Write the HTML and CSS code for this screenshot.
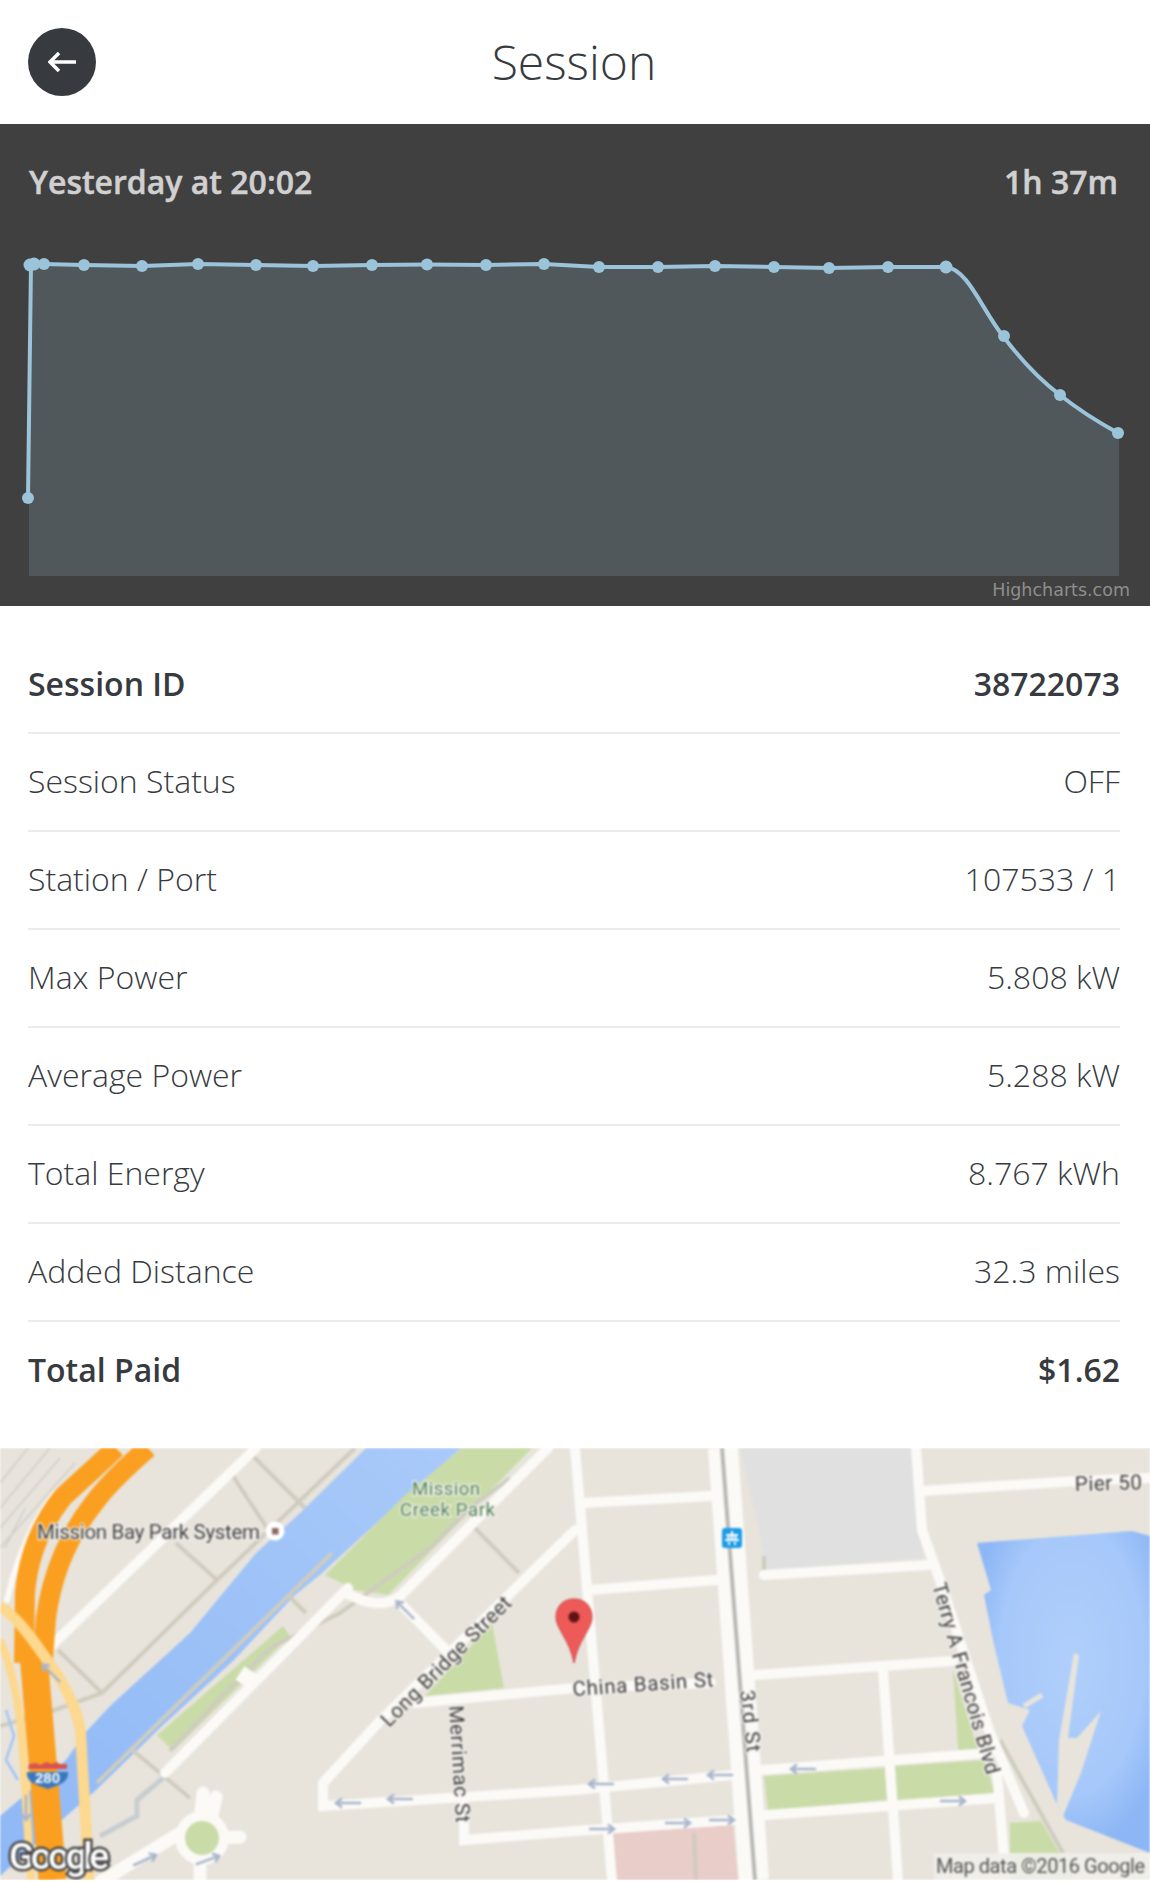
FILE: index.html
```html
<!DOCTYPE html>
<html lang="en">
<head>
<meta charset="utf-8">
<title>Session</title>
<link rel="stylesheet" href="styles.css">
</head>
<body>
<header class="topbar">
  <a class="back" aria-label="Back">
    <svg class="back-icon" viewBox="0 0 28 20"><path d="M28 10H2M11 1 2 10l9 9" /></svg>
  </a>
  <h1 class="title">Session</h1>
</header>

<section class="chart">
  <div class="chart-head">
    <span>Yesterday at 20:02</span>
    <span>1h 37m</span>
  </div>
  <svg class="chart-plot" viewBox="0 0 1150 366">
    <path class="area" d="M29 24H32L43 24 84 25 142 26 198 24 256 25 313 26 372 25 427 24.5 486 25 544 24 599 27 658 27 715 26 774 27 829 28 888 27 946 27C968 29 982 70 1003 96 1024 124 1040 140 1060 155 1080 171 1098 182 1119 194V336H29Z"/>
    <path class="line" d="M28 258 31 24H43L84 25 142 26 198 24 256 25 313 26 372 25 427 24.5 486 25 544 24 599 27 658 27 715 26 774 27 829 28 888 27 946 27C968 29 982 70 1003 96 1024 124 1040 140 1060 155 1080 171 1098 182 1118 193"/>
    <g class="dots">
      <circle cx="28" cy="258" r="6"/><circle cx="30" cy="25" r="6.500"/><circle cx="34" cy="24" r="6.500"/><circle cx="44" cy="24" r="6"/>
      <circle cx="84" cy="25" r="6"/><circle cx="142" cy="26" r="6"/><circle cx="198" cy="24" r="6"/><circle cx="256" cy="25" r="6"/>
      <circle cx="313" cy="26" r="6"/><circle cx="372" cy="25" r="6"/><circle cx="427" cy="24.5" r="6"/><circle cx="486" cy="25" r="6"/>
      <circle cx="544" cy="24" r="6"/><circle cx="599" cy="27" r="6"/><circle cx="658" cy="27" r="6"/><circle cx="715" cy="26" r="6"/>
      <circle cx="774" cy="27" r="6"/><circle cx="829" cy="28" r="6"/><circle cx="888" cy="27" r="6"/><circle cx="946" cy="27" r="6.500"/>
      <circle cx="1004" cy="96" r="6"/><circle cx="1060" cy="155" r="6"/><circle cx="1118" cy="193" r="6"/>
    </g>
    <text class="credit" x="1130" y="356" text-anchor="end">Highcharts.com</text>
  </svg>
</section>

<section class="details">
  <div class="row strong"><span>Session ID</span><span>38722073</span></div>
  <div class="row"><span>Session Status</span><span>OFF</span></div>
  <div class="row"><span>Station / Port</span><span>107533 / 1</span></div>
  <div class="row"><span>Max Power</span><span>5.808 kW</span></div>
  <div class="row"><span>Average Power</span><span>5.288 kW</span></div>
  <div class="row"><span>Total Energy</span><span>8.767 kWh</span></div>
  <div class="row"><span>Added Distance</span><span>32.3 miles</span></div>
  <div class="row strong last"><span>Total Paid</span><span>$1.62</span></div>
</section>

<section class="map">
  <svg class="map-canvas" viewBox="0 0 1150 432">
    <defs>
      <linearGradient id="river" x1="0" y1="1" x2="1" y2="0">
        <stop offset="0" stop-color="#8fb8f6"/><stop offset="1" stop-color="#a9caf9"/>
      </linearGradient>
      <radialGradient id="bay" cx="0.55" cy="0.4" r="0.6">
        <stop offset="0" stop-color="#b0cffb"/><stop offset="0.7" stop-color="#a6c8fa"/><stop offset="1" stop-color="#8cb6f5"/>
      </radialGradient>
      <symbol id="arrow-left" viewBox="-14 -6 28 12" overflow="visible"><path d="M13 0H-11M-6 -4.5-12 0-6 4.5"/></symbol>
    </defs>
    <rect class="land" width="1150" height="432"/>

    <g class="hatch">
      <path d="M0 60 50 0M0 80 60 10M0 100 75 15M0 35 28 0M5 100 25 60"/>
    </g>

    <polygon class="water-river" points="366,0 300,65 256,105 190,185 110,258 85,285 66,312 0,368 0,428 55,378 96,342 162,278 234,212 294,148 322,125 404,50 461,0"/>
    <polygon class="park" points="532,0 462,0 404,48 325,127 355,142 388,147"/>
    <polygon class="park" points="283,178 157,287 173,303 290,188"/>
    <polygon class="park" points="492,175 504,240 425,248"/>
    <polygon class="park" points="764,328 885,320 887,352 768,363"/>
    <polygon class="park" points="895,318 984,312 995,345 897,352"/>
    <polygon class="park" points="953,222 958,302 978,302"/>
    <polygon class="park" points="1010,375 1041,373 1075,432 1010,432"/>
    <polygon class="block-pink" points="612,385 733,377 738,432 614,432"/>
    <polygon class="block-gray" points="740,0 912,0 923,110 768,122"/>
    <polygon class="water-bay" points="977,95 1132,83 1150,88 1150,405 1066,372 1055,352 1022,278 1030,262 1008,255 993,192 984,147 991,142"/>
    <polygon class="land" points="1074,205 1079,207 1068,290 1077,290 1101,263 1081,325 1063,368 1057,355 1059,292"/>
    <path class="path-land" d="M1024 258 1042 247"/>

    <g class="path-gray">
      <path d="M253 8 305 60M231 25 267 80M355 0 217 132 102 245 52 263 0 278M176 95 217 132M58 202 102 245M473 78 519 125M332 105 97 335M289 148 306 165M694 385 696 432M764 108V122M1000 292 1063 405"/>
      <path d="M510 30 470 60 430 100 395 125 340 165 310 180 270 200 220 250 170 303M130 300 190 350"/>
    </g>
    <path class="path-pale" d="M163 330 137 352V368L100 388"/>
    <path class="stream" d="M6 262 14 288 6 312 18 332"/>

    <g class="road">
      <path d="M256 0 47 202"/>
      <path class="road-thin" d="M55 45C35 70 18 105 7 152"/>
      <path d="M548 0 400 148C385 160 365 155 348 146"/>
      <path d="M348 140 165 325"/>
      <path d="M400 155 446 202"/>
      <path d="M575 0 612 432"/>
      <path d="M582 55 711 48M590 142 716 132"/>
      <path d="M414 255 575 240 711 235M755 227 953 213"/>
      <path d="M575 82 378 275 323 335V358L575 342 733 327M762 322 989 305"/>
      <path d="M464 358V392L575 383 733 372M766 367 997 350"/>
      <path d="M764 127 929 117"/>
      <path d="M883 222 898 432M997 325 1006 432"/>
      <path d="M916 0 922 82 942 138 989 282 1024 365"/>
      <path d="M922 43 1077 33 1150 30"/>
      <path class="road-wide" d="M240 225 252 233"/>
      <path class="road-spoke" d="M97 436 180 385M203 345 200 372M216 349 211 372M240 389 215 390M200 436V410"/>
      <circle class="ring" cx="202" cy="390" r="27"/>
    </g>
    <path class="road-3rd" d="M723 0 754 432"/>
    <path class="rail" d="M722 0 755 432"/>
    <circle class="park" cx="202" cy="390" r="17"/>

    <path class="highway" d="M116 0C95 20 78 35 62 50 40 78 28 110 25 145L24 215"/>
    <path class="highway" d="M148 0C125 20 105 40 94 55 70 85 52 125 46 170L42 225"/>
    <path class="highway-main" d="M33 200 52.500 432"/>
    <path class="ramp" d="M0 158C20 172 35 195 47 212 68 240 81 270 81 292L89 432"/>
    <path class="ramp-thin" d="M0 192C12 220 20 260 22 292L31 432"/>

    <g class="arrows">
      <use href="#arrow-left" x="334" y="349" width="28" height="12"/>
      <use href="#arrow-left" x="386" y="345" width="28" height="12"/>
      <use href="#arrow-left" x="587" y="330" width="28" height="12"/>
      <use href="#arrow-left" x="661" y="325" width="28" height="12"/>
      <use href="#arrow-left" x="706" y="321" width="28" height="12"/>
      <use href="#arrow-left" x="789" y="315" width="28" height="12"/>
      <use href="#arrow-left" transform="rotate(180 602 381)" x="588" y="375" width="28" height="12"/>
      <use href="#arrow-left" transform="rotate(180 678 375)" x="664" y="369" width="28" height="12"/>
      <use href="#arrow-left" transform="rotate(180 722 372)" x="708" y="366" width="28" height="12"/>
      <use href="#arrow-left" transform="rotate(180 953 353)" x="939" y="347" width="28" height="12"/>
      <use href="#arrow-left" transform="rotate(45 405 162)" x="391" y="156" width="28" height="12"/>
      <use href="#arrow-left" transform="rotate(45 51 225)" x="37" y="219" width="28" height="12"/>
      <use href="#arrow-left" transform="rotate(-90 26 360)" x="12" y="354" width="28" height="12"/>
      <use href="#arrow-left" transform="rotate(155 145 412)" x="131" y="406" width="28" height="12"/>
      <use href="#arrow-left" transform="rotate(160 208 412)" x="194" y="406" width="28" height="12"/>
    </g>

    <g class="shield">
      <path class="shield-red" d="M28 321 29 316 36 315 40 317 46 314 52 316 56 314 60 316 67 316V321Z"/>
      <path class="shield-blue" d="M27 324H68C69 335 58 337 48 341 37 337 26 335 27 324Z"/>
      <text class="shield-num" x="47.500" y="335" text-anchor="middle">280</text>
    </g>

    <circle class="poi-ring" cx="275" cy="83" r="9.500"/>
    <rect class="poi" x="272" y="80" width="6.500" height="6.500"/>
    <text class="label" x="37" y="91" textLength="223">Mission Bay Park System</text>
    <text class="label green" x="412" y="47" textLength="68">Mission</text>
    <text class="label green" x="400" y="68" textLength="95">Creek Park</text>
    <text class="label" transform="translate(389 280) rotate(-45)" textLength="175">Long Bridge Street</text>
    <text class="label" transform="translate(449 258) rotate(86.500)" textLength="117">Merrimac St</text>
    <text class="label" transform="translate(573 248) rotate(-4)" textLength="141">China Basin St</text>
    <text class="label" transform="translate(740 243) rotate(83.500)" textLength="62">3rd St</text>
    <text class="label" transform="translate(932 137) rotate(74)" textLength="198">Terry A Francois Blvd</text>
    <text class="label" transform="translate(1075 43) rotate(-1.500)" textLength="67">Pier 50</text>

    <g>
      <rect class="bus-bg" x="722" y="80" width="20" height="20" rx="3"/>
      <path class="bus" d="M726 86H738V88H726ZM727.500 88H729.500V91H727.500ZM734.500 88H736.500V91H734.500ZM731 83H733V91H731ZM725 91H739V93H725ZM728 94H730V97H728ZM734 94H736V97H734Z"/>
    </g>

    <path class="pin" d="M574 151C561 151 556 161 556 169 556 181 570 192 574 215 578 192 592 181 592 169 592 161 587 151 574 151Z"/>
    <circle class="pin-dot" cx="574" cy="169" r="5.500"/>

    <rect class="attr-bg" x="934" y="405" width="216" height="27"/>
    <text class="attr" x="936" y="425" textLength="209">Map data ©2016 Google</text>
    <text class="google" x="9" y="421" textLength="100">Google</text>
  </svg>
</section>
</body>
</html>
```

FILE: styles.css
```css
* { box-sizing: border-box; }

html, body { margin: 0; padding: 0; background: #fff; }

body {
  font-family: "Open Sans", "Liberation Sans", sans-serif;
  color: #373b3f;
  height: 1882px;
  overflow: hidden;
}

.topbar {
  height: 124px;
  padding: 0 28px;
  display: grid;
  grid-template-columns: 68px 1fr 68px;
  align-items: center;
}

.back {
  width: 68px;
  height: 68px;
  border-radius: 50%;
  background: #373b3f;
  display: flex;
  align-items: center;
  justify-content: center;
}

.back-icon { width: 28px; height: 20px; }
.back-icon path { fill: none; stroke: #fff; stroke-width: 3.5; }

.title {
  margin: 0;
  padding-right: 2px;
  font-size: 48px;
  font-weight: 300;
  line-height: 124px;
  text-align: center;
}

.chart { height: 482px; background: #404040; display: flex; flex-direction: column; }

.chart-head {
  height: 116px;
  padding: 36px 32px 0 29px;
  display: flex;
  justify-content: space-between;
  align-items: flex-start;
  font-size: 32px;
  line-height: 44px;
  font-weight: 600;
  color: #d0d0d0;
  -webkit-text-stroke: 0.5px #d0d0d0;
}

.chart-plot { display: block; width: 1150px; height: 366px; }
.area { fill: #50585c; }
.line { fill: none; stroke: #9bc3d9; stroke-width: 4; }
.dots circle { fill: #9bc3d9; }
.credit { font-family: "DejaVu Sans", sans-serif; font-size: 17.5px; fill: #8e8e8e; }

.details { padding: 30px 30px 28px 28px; }

.row {
  height: 98px;
  padding-bottom: 3px;
  border-bottom: 2px solid #ebebeb;
  display: flex;
  justify-content: space-between;
  align-items: center;
  font-size: 32px;
  font-weight: 300;
}

.row.strong { font-weight: 600; padding-bottom: 1px; }
.row.last { border-bottom: 0; padding-bottom: 4px; }

.map { height: 432px; overflow: hidden; }
.map-canvas { display: block; width: 1150px; height: 432px; filter: blur(0.9px); }

.land { fill: #e8e4dc; }
.hatch path { fill: none; stroke: #cfcdc8; stroke-width: 1.500; }
.water-river { fill: url(#river); }
.water-bay { fill: url(#bay); }
.park { fill: #c9dca8; }
.block-pink { fill: #e8cdc9; }
.block-gray { fill: #e0e0e0; }
.path-land { fill: none; stroke: #e8e4dc; stroke-width: 5; }
.path-gray path { fill: none; stroke: #cfccbf; stroke-width: 4; }
.path-pale { fill: none; stroke: #c9cdd0; stroke-width: 5; }
.stream { fill: none; stroke: #a3c4f5; stroke-width: 2.500; }

.road path { fill: none; stroke: #fbfaf7; stroke-width: 10; stroke-linecap: round; }
.road .road-wide { stroke-width: 16; stroke-linecap: butt; }
.road .road-thin { stroke-width: 6; }
.road .road-spoke { stroke-width: 13; }
.ring { fill: #fbfaf7; }
.road-3rd { fill: none; stroke: #fbfaf7; stroke-width: 30; }
.rail { fill: none; stroke: #b9b9b4; stroke-width: 4; }

.highway { fill: none; stroke: #fb9f20; stroke-width: 20; }
.highway-main { fill: none; stroke: #fb9f20; stroke-width: 28; }
.ramp { fill: none; stroke: #fdd88f; stroke-width: 11; }
.ramp-thin { fill: none; stroke: #fdd88f; stroke-width: 8; }

.arrows use { fill: none; stroke: #a9b5cc; stroke-width: 2.500; }

.shield-red { fill: #d8534f; }
.shield-blue { fill: #3a78bd; }
.shield-num { font-family: "Liberation Sans", sans-serif; font-weight: 700; font-size: 15px; fill: #fff; }

.poi-ring { fill: #fff; }
.poi { fill: #8b6a60; }

.label {
  font-family: Roboto, "Liberation Sans", sans-serif;
  font-size: 20.5px;
  fill: #3f3f3f;
  stroke: #f4f2ee;
  stroke-width: 2.500px;
  paint-order: stroke;
}

.label.green { font-size: 18.5px; fill: #4f8254; }

.bus-bg { fill: #1a9be8; }
.bus { fill: #fff; }

.pin { fill: #ee5a58; stroke: #c9413f; stroke-width: 1; }
.pin-dot { fill: #5e1412; }

.attr-bg { fill: #f0eeea; opacity: 0.9; }
.attr { font-family: Roboto, "Liberation Sans", sans-serif; font-size: 20px; fill: #555; }

.google {
  font-family: Roboto, "Liberation Sans", sans-serif;
  font-size: 37px;
  font-weight: 500;
  fill: #fff;
  stroke: #4a4a4a;
  stroke-width: 5px;
  paint-order: stroke;
}
```
